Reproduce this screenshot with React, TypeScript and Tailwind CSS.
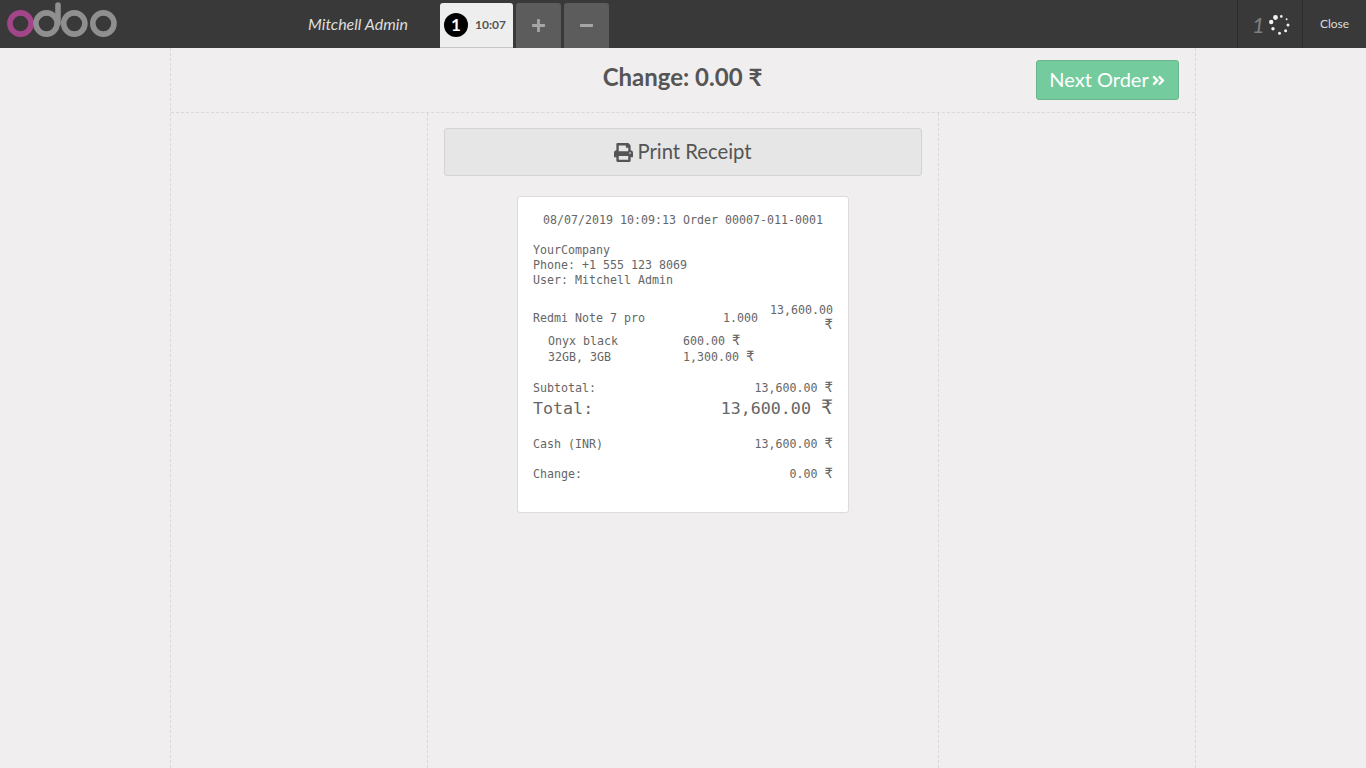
import { FaPrint, FaAngleDoubleRight, FaPlus, FaMinus } from "react-icons/fa";

const lato = "font-['Lato','Noto_Sans',sans-serif]";
const mono = "font-['DejaVu_Sans_Mono','Liberation_Mono',monospace]";

function Logo() {
  return (
    <svg width="118" height="40" viewBox="0 0 118 40" className="ml-[3px] mt-[1px] shrink-0">
      <g fill="none" strokeWidth="5.6">
        <circle cx="17.5" cy="22.5" r="10.6" stroke="#a24689" />
        <circle cx="43.5" cy="22.5" r="10.6" stroke="#8f8f8f" />
        <path d="M55 22.5V4" stroke="#8f8f8f" strokeLinecap="round" />
        <circle cx="71.3" cy="22.5" r="10.6" stroke="#8f8f8f" />
        <circle cx="100.4" cy="22.5" r="10.6" stroke="#8f8f8f" />
      </g>
    </svg>
  );
}

function Spinner() {
  return (
    <svg width="22" height="22" viewBox="0 0 22 22" className="ml-[3px] mt-[2px]">
      <g fill="#f2f2f2">
        <circle cx="7.5" cy="3.5" r="2.4" />
        <circle cx="3.2" cy="8" r="2.2" />
        <circle cx="13.3" cy="2.4" r="1.3" />
        <circle cx="18.6" cy="5.2" r="1" />
        <circle cx="20" cy="11" r="1.5" />
        <circle cx="17.6" cy="16.8" r="1.5" />
        <circle cx="11.5" cy="19.2" r="1.5" />
        <circle cx="5" cy="14.8" r="1.7" />
      </g>
    </svg>
  );
}

function Rs() {
  return <span className="text-[1.2em] leading-[0]">₹</span>;
}

function Row({ label, value, cls = "" }: { label: string; value: string; cls?: string }) {
  return (
    <div className={`flex justify-between ${cls}`}>
      <span>{label}</span>
      <span>
        {value} <Rs />
      </span>
    </div>
  );
}

export default function App() {
  return (
    <div className={`flex h-[768px] w-[1366px] flex-col overflow-hidden bg-[#f0eeee] text-[#555555] ${lato}`}>
      <header className="flex h-[48px] shrink-0 bg-[#393939]">
        <Logo />
        <span className="ml-[187px] mt-[14px] w-[132px] text-[16px] italic leading-[20px] text-[#dddddd]">Mitchell Admin</span>
        <div className="mt-[3px] flex h-[45px] w-[73px] items-center rounded-t-[3px] border-b border-b-[#c7c7c7] bg-[#efeeee] pl-[4px]">
          <span className="flex h-[24px] w-[24px] items-center justify-center rounded-full bg-black text-[17px] font-bold text-white">1</span>
          <span className="ml-[7px] text-[12px] font-bold text-[#555555]">10:07</span>
        </div>
        <div className="ml-[3px] mt-[3px] flex h-[45px] w-[45px] items-center justify-center rounded-t-[3px] bg-[#5c5c5c] text-[#a6a6a6]">
          <FaPlus size={15} />
        </div>
        <div className="ml-[3px] mt-[3px] flex h-[45px] w-[45px] items-center justify-center rounded-t-[3px] bg-[#5c5c5c] text-[#a6a6a6]">
          <FaMinus size={15} />
        </div>
        <div className="ml-auto flex h-[48px] w-[65px] items-center border-l border-l-[#2c2c2c] pl-[14px]">
          <span className="text-[22px] italic text-[#808080]">1</span>
          <Spinner />
        </div>
        <div className="flex h-[48px] w-[64px] items-center justify-center border-l border-l-[#2c2c2c] text-[12px] text-[#dddddd]">Close</div>
      </header>

      <main className="mx-auto flex min-h-0 w-[1026px] flex-1 flex-col border-x border-dashed border-x-[#d9d9d9]">
        <div className="flex h-[65px] shrink-0 border-b border-dashed border-b-[#d9d9d9]">
          <div className="w-[256px]" />
          <div className="w-[511px] pt-[12px] text-center text-[24px] font-bold leading-[34px]">Change: 0.00 ₹</div>
          <div className="flex flex-1 justify-end pr-[16px] pt-[12px]">
            <div className="flex h-[40px] w-[143px] items-center justify-center rounded-[3px] border border-[#6ab48e] bg-[#74cb9d] pb-[2px] text-[20px] text-white">
              Next Order
              <FaAngleDoubleRight size={15} className="ml-[2px] mt-[2px]" />
            </div>
          </div>
        </div>
        <div className="flex min-h-0 flex-1">
          <div className="w-[256px]" />
          <div className="w-[512px] border-x border-dashed border-x-[#d9d9d9] px-[16px] pt-[15px]">
            <div className="flex h-[48px] items-center justify-center rounded-[3px] border border-[#d3d3d3] bg-[#e6e6e6] pb-[2px] text-[20px]">
              <FaPrint size={19} className="mr-[4px] mt-[2px]" />
              <span className="text-[20.3px]">Print Receipt</span>
            </div>
            <div className={`mx-auto mt-[20px] h-[317px] w-[332px] rounded-[3px] border border-[#dcdcdc] bg-white px-[15px] pt-[16px] text-[11.63px] leading-[15px] text-[#666666] ${mono}`}>
              <div className="text-center">08/07/2019 10:09:13 Order 00007-011-0001</div>
              <div className="mt-[15px]">
                <div>YourCompany</div>
                <div>Phone: +1 555 123 8069</div>
                <div>User: Mitchell Admin</div>
              </div>
              <div className="mt-[15px] flex items-center">
                <span className="flex-1">Redmi Note 7 pro</span>
                <span className="w-[40px] text-right">1.000</span>
                <span className="ml-[12px] w-[63px] text-right">
                  13,600.00 <Rs />
                </span>
              </div>
              <div className="flex pl-[15px] leading-[16px]">
                <span className="w-[135px]">Onyx black</span>
                <span>
                  600.00 <Rs />
                </span>
              </div>
              <div className="flex pl-[15px] leading-[16px]">
                <span className="w-[135px]">32GB, 3GB</span>
                <span>
                  1,300.00 <Rs />
                </span>
              </div>
              <Row label="Subtotal:" value="13,600.00" cls="mt-[16px]" />
              <Row label="Total:" value="13,600.00" cls="mt-[1px] text-[16.67px] leading-[24px]" />
              <Row label="Cash (INR)" value="13,600.00" cls="mt-[16px]" />
              <Row label="Change:" value="0.00" cls="mt-[15px]" />
            </div>
          </div>
          <div className="flex-1" />
        </div>
      </main>
    </div>
  );
}
